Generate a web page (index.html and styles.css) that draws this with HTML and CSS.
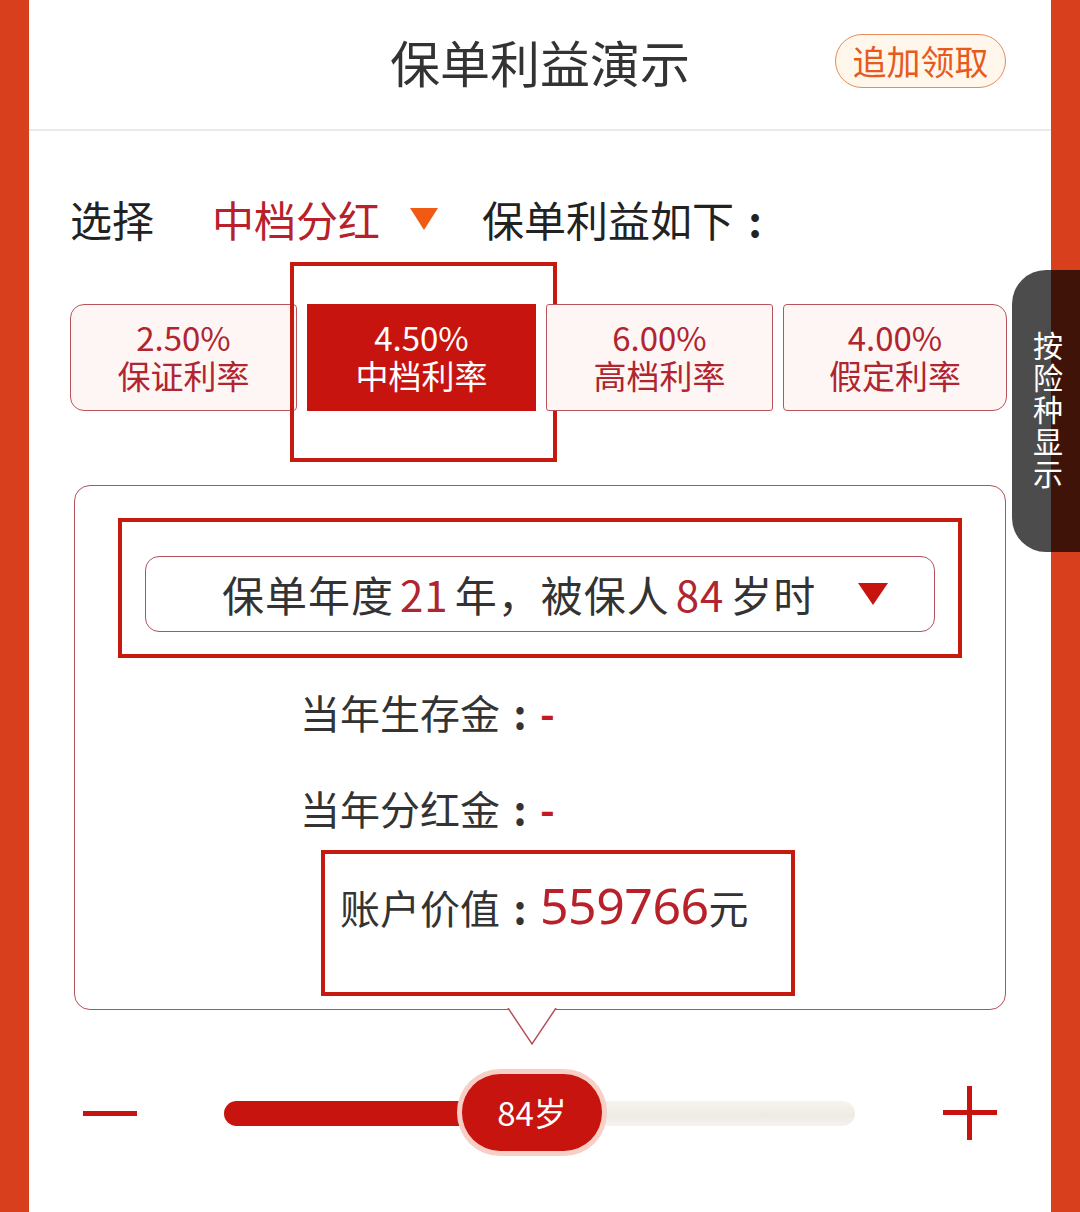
FILE: index.html
```html
<!DOCTYPE html>
<html lang="zh-CN">
<head>
    <meta charset="UTF-8">
    <meta name="viewport" content="width=device-width, initial-scale=1.0">
    <title>保单利益演示</title>
    <link rel="stylesheet" href="styles.css">
</head>
<body>
    <div class="page">
        <header class="top-bar">
            <h1 class="title">保单利益演示</h1>
            <button class="extra-btn">追加领取</button>
        </header>

        <div class="select-row">
            <span class="select-label">选择</span>
            <span class="plan">中档分红</span>
            <span class="caret"></span>
            <span>保单利益如下<span class="colon">:</span></span>
        </div>

        <div class="rates">
            <div class="rate first">
                <span>2.50%</span>
                <span>保证利率</span>
            </div>
            <div class="rate active">
                <span>4.50%</span>
                <span>中档利率</span>
                <span class="mark mark-rate"></span>
            </div>
            <div class="rate">
                <span>6.00%</span>
                <span>高档利率</span>
            </div>
            <div class="rate last">
                <span>4.00%</span>
                <span>假定利率</span>
            </div>
        </div>

        <div class="detail">
            <div class="year-select">
                <span>保单年度<em class="num">21</em>年，被保人<em class="num">84</em>岁时</span>
                <span class="year-caret"></span>
                <span class="mark mark-year"></span>
            </div>
            <div class="line">当年生存金<span class="colon">:</span><em class="dash">-</em></div>
            <div class="line">当年分红金<span class="colon">:</span><em class="dash">-</em></div>
            <div class="line value">
                账户价值<span class="colon">:</span><em class="amount">559766</em>元
                <span class="mark mark-value"></span>
            </div>
            <svg class="pointer" width="50" height="38" viewBox="0 0 50 38">
                <polyline points="1,0 25,36 49,0" fill="#fff" stroke="#b5505a" stroke-width="1.5"/>
            </svg>
        </div>

        <div class="slider">
            <span class="minus"></span>
            <div class="track">
                <div class="track-fill"></div>
                <div class="thumb">84岁</div>
            </div>
            <span class="plus"></span>
        </div>
    </div>

    <div class="side-tab"><span class="side-text">按险种显示</span></div>
</body>
</html>
```

FILE: styles.css
```css
* {
    margin: 0;
    padding: 0;
    box-sizing: border-box;
}

body {
    font-family: "Noto Sans CJK SC", "Noto Sans", sans-serif;
    background: #d8401d;
    color: #333;
    height: 1212px;
    overflow: hidden;
    position: relative;
}

em {
    font-style: normal;
}

/* full-width colon, glyph centred in its cell */
.colon {
    display: inline-block;
    width: 1em;
    text-align: center;
    font-weight: 700;
}

.page {
    margin: 0 29px;
    background: #fff;
    height: 1212px;
}

/* header */
.top-bar {
    height: 131px;
    border-bottom: 2px solid #ebebeb;
    display: grid;
    grid-template-columns: 1fr auto 1fr;
    align-items: center;
    padding-bottom: 8px;
}

.title {
    grid-column: 2;
    font-size: 50px;
    font-weight: 400;
    color: #333;
}

.extra-btn {
    grid-column: 3;
    justify-self: end;
    margin-right: 45px;
    width: 171px;
    height: 54px;
    border: 1.5px solid #e58c5a;
    border-radius: 27px;
    background: #fff6ec;
    color: #e85a1c;
    font-family: inherit;
    font-size: 34px;
    line-height: 50px;
}

/* plan selector */
.select-row {
    display: flex;
    align-items: center;
    padding: 64px 0 0 41px;
    height: 112px;
    font-size: 42px;
    line-height: 48px;
    color: #222;
}

.select-label {
    margin-right: 58px;
}

.plan {
    color: #b8202a;
}

.caret {
    width: 0;
    height: 0;
    border-left: 14px solid transparent;
    border-right: 14px solid transparent;
    border-top: 22px solid #f05a14;
    margin: 0 44px 0 30px;
}

/* interest rate tabs */
.rates {
    display: grid;
    grid-template-columns: 227px 229px 227px 224px;
    gap: 10px;
    margin: 61px 0 0 41px;
    height: 107px;
}

.rate {
    position: relative;
    display: flex;
    flex-direction: column;
    align-items: center;
    justify-content: center;
    background: #fdf6f4;
    border: 1.5px solid #b9545d;
    border-radius: 3px;
    color: #b0252f;
    font-size: 33px;
    line-height: 38px;
    padding-bottom: 4px;
}

.rate.first {
    border-radius: 14px 4px 4px 14px;
}

.rate.last {
    border-radius: 4px 14px 14px 4px;
}

.rate.active {
    background: #c8140f;
    border-color: #c8140f;
    border-radius: 0;
    color: #fff;
}

/* red outlines drawn over content */
.mark {
    position: absolute;
    border: 4px solid #c41a10;
    pointer-events: none;
}

.mark-rate {
    top: -43px;
    left: -18px;
    right: -22px;
    bottom: -52px;
}

/* detail card */
.detail {
    position: relative;
    margin: 74px 0 0 45px;
    width: 932px;
    height: 525px;
    border: 1.5px solid #b5505a;
    border-radius: 16px;
    padding-top: 70px;
}

.year-select {
    position: relative;
    display: flex;
    align-items: center;
    justify-content: space-between;
    margin-left: 70px;
    width: 790px;
    height: 76px;
    border: 1.5px solid #b5505a;
    border-radius: 14px;
    padding: 0 46px 0 76px;
    font-size: 42px;
    line-height: 50px;
    color: #333;
    letter-spacing: 1px;
}

.year-select .num {
    color: #b0252f;
    margin: 0 6px;
}

.year-caret {
    width: 0;
    height: 0;
    border-left: 15px solid transparent;
    border-right: 15px solid transparent;
    border-top: 22px solid #c8140f;
}

.mark-year {
    top: -39px;
    left: -28px;
    right: -28px;
    bottom: -27px;
}

.line {
    position: relative;
    margin: 52px 0 0 225px;
    font-size: 40px;
    line-height: 56px;
    color: #333;
}

.line + .line {
    margin-top: 40px;
}

.dash {
    color: #c41a20;
    font-weight: 700;
}

.line.value {
    margin-top: 41px;
    margin-left: 265px;
    display: flex;
    align-items: baseline;
}

.amount {
    color: #b8202a;
    font-family: "Noto Sans", sans-serif;
    font-size: 50px;
    letter-spacing: -0.5px;
}

.mark-value {
    top: -27px;
    left: -19px;
    width: 474px;
    height: 146px;
}

.pointer {
    position: absolute;
    left: 432px;
    top: 100%;
    margin-top: -1px;
}

/* age slider */
.slider {
    display: flex;
    align-items: center;
    margin-top: 63px;
    padding-left: 54px;
    height: 80px;
}

.minus {
    width: 54px;
    height: 5px;
    background: #c8140f;
}

.track {
    position: relative;
    margin: 0 88px 0 87px;
    width: 631px;
    height: 25px;
    border-radius: 13px;
    background: linear-gradient(#f7f4f0, #eeeae3 60%, #f6f3ef);
}

.track-fill {
    width: 250px;
    height: 100%;
    border-radius: 13px 0 0 13px;
    background: #c8140f;
}

.thumb {
    position: absolute;
    left: 238px;
    top: -27px;
    width: 140px;
    height: 77px;
    border-radius: 38px;
    background: #c8140f;
    box-shadow: 0 0 0 5px #f8cfc6;
    color: #fff;
    font-size: 33px;
    line-height: 77px;
    text-align: center;
}

.plus {
    position: relative;
    width: 54px;
    height: 54px;
}

.plus::before,
.plus::after {
    content: "";
    position: absolute;
    background: #c8140f;
}

.plus::before {
    left: 0;
    right: 0;
    top: 24px;
    height: 5px;
}

.plus::after {
    top: 0;
    bottom: 0;
    left: 24px;
    width: 5px;
}

/* floating side tab */
.side-tab {
    position: absolute;
    right: 0;
    top: 270px;
    width: 68px;
    height: 282px;
    border-radius: 34px 0 0 34px;
    background: rgba(0, 0, 0, 0.7);
    display: flex;
    align-items: center;
    justify-content: center;
    padding-left: 4px;
}

.side-text {
    writing-mode: vertical-rl;
    color: #fff;
    font-size: 30px;
    line-height: 32px;
    letter-spacing: 2px;
}
```
